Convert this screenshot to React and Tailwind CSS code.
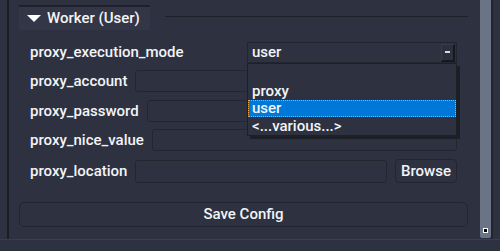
import React from 'react';

const Field = ({ label, children, className = '' }) => (
  <div className={`flex items-center gap-[8px] ${className}`}>
    <span className="whitespace-nowrap">{label}</span>
    {children}
  </div>
);

const App = () => {
  return (
    <div
      className="relative w-[500px] h-[251px] overflow-hidden bg-[#2e3140] text-[15px] font-medium text-[#f2f4f8]"
      style={{ fontFamily: 'Roboto, "Noto Sans", sans-serif' }}
    >
      <div className="flex h-[239px]">
        {/* Main panel */}
        <div className="w-[480px] pl-[7px] flex">
          <div className="flex-1 border-l-2 border-[#1c1e26] pl-[10px] pr-[12px] pt-[5px]">
            {/* Section header */}
            <div className="flex items-center">
              <div className="flex items-center gap-[6px] w-[131px] h-[25px] bg-[#323646] border-t-2 border-[#1f212a] pl-[8px]">
                <span className="w-0 h-0 border-l-[7px] border-r-[7px] border-t-[7px] border-l-transparent border-r-transparent border-t-white" />
                <span className="text-[15px]">Worker (User)</span>
              </div>
              <div className="flex-1 ml-[15px] h-[1px] bg-[#1e2029] -mt-[2px]" />
            </div>

            {/* Form */}
            <div className="pl-[11px] pr-[11px] mt-[12px]">
              <div className="relative">
                <Field label="proxy_execution_mode" className="h-[21px]">
                  <div className="ml-auto w-[210px] h-[21px] flex items-center justify-between border border-[#23262f] pl-[4px] pr-[1px]">
                    <span>user</span>
                    <div className="w-[14px] h-[18px] flex items-center justify-center bg-[#2c2f3d] border-t border-l border-[#373b4a] border-r-2 border-b-2 border-r-[#16181e] border-b-[#16181e]">
                      <span className="w-[5px] h-[2px] bg-[#d8dbe2]" />
                    </div>
                  </div>
                </Field>

                {/* Open dropdown list */}
                <div className="absolute z-10 left-[217px] top-[21px] w-[210px] h-[73px] bg-[#2e3140] border border-[#1e2029] shadow-[3px_3px_0_#1d1f27] flex flex-col pt-[18px]">
                  <div className="h-[18px] flex items-center pl-[4px]">proxy</div>
                  <div className="h-[17px] flex items-center pl-[4px] bg-[#0078d7] outline-1 outline-dotted outline-[#f0a040] -outline-offset-1">user</div>
                  <div className="h-[18px] flex items-center pl-[4px]">&lt;...various...&gt;</div>
                </div>
              </div>

              <Field label="proxy_account" className="mt-[7px] h-[22px]">
                <div className="flex-1 h-[22px] border border-[#23262f] rounded-[3px]" />
              </Field>
              <Field label="proxy_password" className="mt-[8px] h-[22px]">
                <div className="flex-1 h-[22px] border border-[#23262f] rounded-[3px]" />
              </Field>
              <Field label="proxy_nice_value" className="mt-[7px] h-[22px]">
                <div className="flex-1 h-[22px] border border-[#23262f] rounded-[3px]" />
              </Field>
              <Field label="proxy_location" className="mt-[8px] h-[24px]">
                <div className="flex-1 h-[23px] mt-[1px] border border-[#23262f] rounded-[3px]" />
                <button className="w-[62px] h-[24px] border border-[#23262f] rounded-[4px]">
                  Browse
                </button>
              </Field>
            </div>

            <button className="mt-[19px] w-[449px] h-[25px] border border-[#23262f] rounded-[5px]">
              Save Config
            </button>
          </div>
        </div>

        {/* Scrollbar */}
        <div className="relative w-[11px] h-[238px] bg-[#6b7386] rounded-b-[2px]">
          <span className="absolute left-[4px] bottom-[6px] w-[3px] h-[3px] bg-black outline-1 outline-white" />
        </div>
        <div className="w-[2px] bg-[#22252e]" />
      </div>
      <div className="h-[1px] bg-[#3a3e4d]" />
    </div>
  );
};

export default App;
